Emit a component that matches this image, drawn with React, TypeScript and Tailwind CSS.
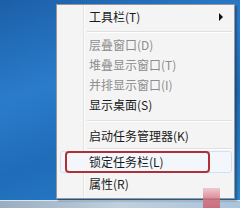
const font = { fontFamily: '"Noto Sans CJK SC", "Noto Sans", sans-serif' };

type Item =
  | { kind: "item"; label: string; h: string; disabled?: boolean; submenu?: boolean; locked?: boolean }
  | { kind: "sep"; h: string };

const items: Item[] = [
  { kind: "item", label: "工具栏(T)", h: "h-[24px]", submenu: true },
  { kind: "sep", h: "h-[6px]" },
  { kind: "item", label: "层叠窗口(D)", h: "h-[20px]", disabled: true },
  { kind: "item", label: "堆叠显示窗口(T)", h: "h-[20px]", disabled: true },
  { kind: "item", label: "并排显示窗口(I)", h: "h-[20px]", disabled: true },
  { kind: "item", label: "显示桌面(S)", h: "h-[20px]" },
  { kind: "sep", h: "h-[11px]" },
  { kind: "item", label: "启动任务管理器(K)", h: "h-[20px]" },
  { kind: "sep", h: "h-[5px]" },
  { kind: "item", label: "锁定任务栏(L)", h: "h-[22px]", locked: true },
  { kind: "item", label: "属性(R)", h: "h-[22px]" },
];

export default function App() {
  return (
    <div
      className="relative w-[240px] h-[208px] overflow-hidden flex flex-col bg-[linear-gradient(160deg,#1c5fa8_0%,#2a7ccb_35%,#1f6cb9_60%,#2c86cf_100%)]"
      style={font}
    >
      <div className="flex-1" />
      {/* Taskbar */}
      <div className="h-[8px] bg-[linear-gradient(90deg,#98adc0_0%,#c0d0de_50%,#a9c4dd_100%)] border-t border-[#d9e4ee]" />

      {/* Context menu */}
      <div className="absolute left-[56px] top-[4px] w-[179px] h-[195px] bg-[#f5f4f4] border border-[#979797] shadow-[2px_2px_2px_rgba(0,0,0,0.3)] flex">
        <div className="relative flex-1 flex flex-col">
          {/* gutter line */}
          <div className="absolute left-[26px] top-0 bottom-0 w-[2px] border-l border-[#e2e3e3] bg-white/60" />
          {items.map((it, i) =>
            it.kind === "sep" ? (
              <div key={i} className={`${it.h} flex items-center pl-[30px] pr-[2px]`}>
                <div className="w-full h-[2px] border-t border-[#e0e0e0] bg-white" />
              </div>
            ) : (
              <div
                key={i}
                className={`relative ${it.h} flex items-center pl-[32px] pr-[10px] text-[12px] leading-none ${
                  it.disabled ? "text-[#8d8d8d]" : "text-[#1a1a1a]"
                }`}
              >
                {it.locked && (
                  <>
                    <div className="absolute left-[3px] right-[2px] top-0 bottom-0 rounded-[3px] border border-[#cfe1f3] bg-[#f3f7fb]" />
                    <div className="absolute left-[8px] right-[24px] top-0 bottom-0 rounded-[4px] border-2 border-[#b0303a]" />
                  </>
                )}
                <span className="relative flex-1">{it.label}</span>
                {it.submenu && (
                  <svg width="5" height="8" viewBox="0 0 5 8" className="relative">
                    <path d="M0 0 L4 4 L0 8 Z" fill="#111" />
                  </svg>
                )}
              </div>
            )
          )}
        </div>
      </div>

      {/* pink blur overlay */}
      <div className="absolute left-[203px] top-[188px] w-[17px] h-[20px] bg-[linear-gradient(180deg,rgba(230,150,160,0.45)_0%,rgba(214,112,126,0.85)_60%,rgba(205,100,115,0.9)_100%)]" />
    </div>
  );
}
